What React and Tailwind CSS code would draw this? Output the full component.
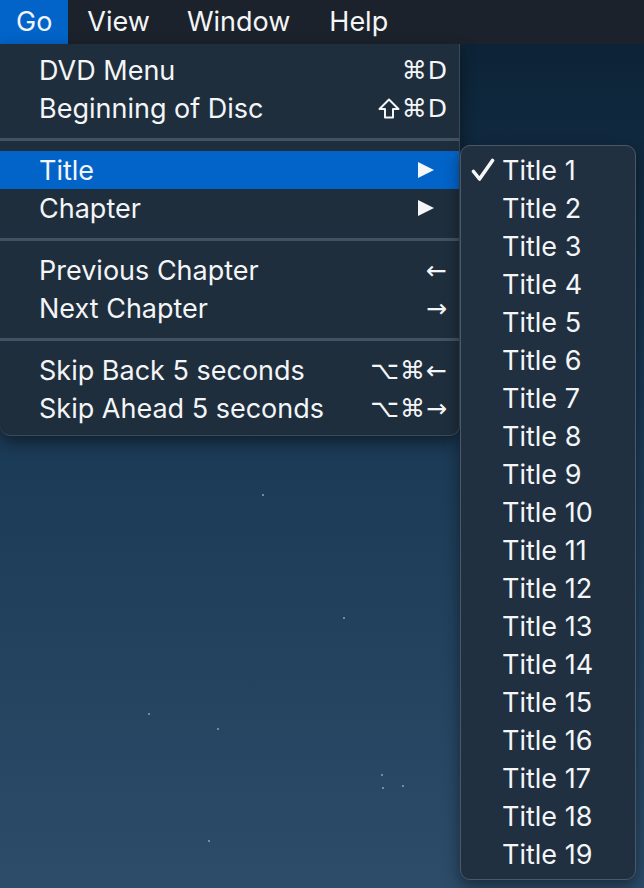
import React from 'react';

const font = { fontFamily: 'Inter, "Noto Sans", "DejaVu Sans", sans-serif' };

// little triangle used for submenu items
function SubArrow() {
  return (
    <svg width="18" height="18" viewBox="0 0 18 18" className="block">
      <polygon points="1,1 17,9 1,17" fill="#f4f6f8" />
    </svg>
  );
}

function Check() {
  return (
    <svg width="24" height="24" viewBox="0 0 24 24" className="block">
      <path d="M2.5 13.5 L8.5 21 L21.5 2.5" fill="none" stroke="#f4f6f8" strokeWidth="3.6" strokeLinecap="round" strokeLinejoin="round" />
    </svg>
  );
}

// outlined shift key glyph
function Shift() {
  return (
    <svg width="22" height="21" viewBox="0 0 22 21" className="mr-[2px] inline-block align-[-2px]">
      <polygon points="11,1.5 20.5,11 15,11 15,19.5 7,19.5 7,11 1.5,11" fill="none" stroke="#f4f6f8" strokeWidth="2" strokeLinejoin="round" />
    </svg>
  );
}

const keyFont = { fontFamily: '"DejaVu Sans", Inter, sans-serif' };

function Row({ label, shortcut, arrow, active }) {
  return (
    <div className={`flex h-[38px] items-center pl-[39px] pr-[11px] ${active ? 'bg-[#0264c9]' : ''}`}>
      <span className="flex-1 text-[27px] leading-none text-[#f3f5f7]">{label}</span>
      {arrow && (
        <span className="pr-[13px]">
          <SubArrow />
        </span>
      )}
      {shortcut && (
        <span className="flex items-center text-[25px] leading-none text-[#f3f5f7] tracking-[1px]" style={keyFont}>
          {shortcut}
        </span>
      )}
    </div>
  );
}

function Separator() {
  return (
    <div className="flex h-[24px] items-center">
      <div className="h-[3px] w-full bg-[#435263]" />
    </div>
  );
}

const titles = Array.from({ length: 19 }, (_, i) => `Title ${i + 1}`);

const stars = [
  [148, 713], [217, 728], [262, 494], [343, 617], [381, 774], [382, 787], [208, 840], [402, 785], [309, 100], [525, 520],
];

export default function App() {
  return (
    <div className="relative h-[888px] w-[644px] overflow-hidden bg-gradient-to-b from-[#0b2134] via-[#1b3a55] to-[#2c4c69]" style={font}>
      {stars.map(([x, y], i) => (
        <div key={i} className="absolute h-[2px] w-[2px] rounded-full bg-[#8ea3b8]" style={{ left: x, top: y }} />
      ))}

      {/* menu bar */}
      <div className="flex h-[44px] items-center bg-[#1c222b] text-[27px] text-[#f3f5f7]">
        <div className="flex h-full items-center bg-[#0264c9] px-[16px]">Go</div>
        <div className="pl-[19px] pr-[18px]">View</div>
        <div className="pl-[19px] pr-[19px]">Window</div>
        <div className="pl-[20px] pr-[18px]">Help</div>
      </div>

      {/* Go menu */}
      <div className="absolute left-0 top-[44px] w-[460px] rounded-b-[10px] border-r border-b border-[#3b4a5a] bg-[#1f2e3d] pt-[7px] pb-[8px] shadow-[0_6px_16px_rgba(0,0,0,0.45)]">
        <Row label="DVD Menu" shortcut="⌘D" />
        <Row label="Beginning of Disc" shortcut={<><Shift />⌘D</>} />
        <Separator />
        <Row label="Title" arrow active />
        <Row label="Chapter" arrow />
        <Separator />
        <Row label="Previous Chapter" shortcut="←" />
        <Row label="Next Chapter" shortcut="→" />
        <Separator />
        <Row label="Skip Back 5 seconds" shortcut="⌥⌘←" />
        <Row label="Skip Ahead 5 seconds" shortcut="⌥⌘→" />
      </div>

      {/* Title submenu */}
      <div className="absolute left-[460px] top-[145px] w-[176px] rounded-[10px] border border-[#4a5968] bg-[#203040] pt-[5px] pb-[6px] shadow-[0_6px_16px_rgba(0,0,0,0.45)]">
        {titles.map((t, i) => (
          <div key={t} className="flex h-[38px] items-center">
            <span className="flex w-[41px] justify-end pr-[7px]">{i === 0 && <Check />}</span>
            <span className="text-[27px] leading-none text-[#f3f5f7]">{t}</span>
          </div>
        ))}
      </div>
    </div>
  );
}
